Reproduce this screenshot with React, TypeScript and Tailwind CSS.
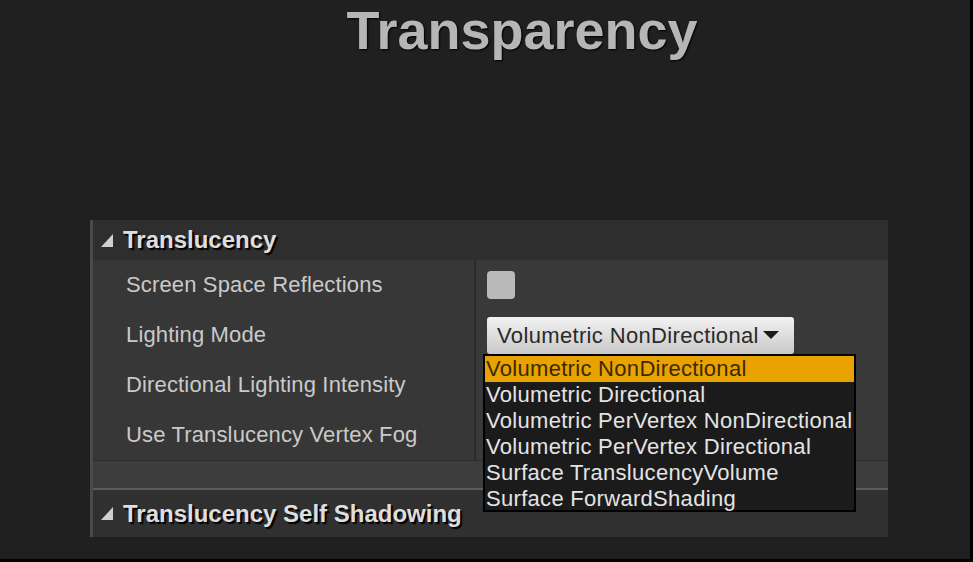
import React from "react";

const rows = [
  "Screen Space Reflections",
  "Lighting Mode",
  "Directional Lighting Intensity",
  "Use Translucency Vertex Fog",
];

const modes = [
  "Volumetric NonDirectional",
  "Volumetric Directional",
  "Volumetric PerVertex NonDirectional",
  "Volumetric PerVertex Directional",
  "Surface TranslucencyVolume",
  "Surface ForwardShading",
];

const Triangle = () => (
  <svg width="14" height="15" viewBox="0 0 14 15" className="shrink-0">
    <polygon points="13,1 13,14 1,14" fill="#cfcfcf" />
  </svg>
);

const SectionHeader = ({ title, h }: { title: string; h: string }) => (
  <div className={`flex items-center gap-[9px] pl-[7px] bg-[#2e2e2e] ${h}`}>
    <Triangle />
    <span className="text-[24px] font-bold leading-none text-[#dedede] [text-shadow:2px_2px_1px_#000]">
      {title}
    </span>
  </div>
);

export default function App() {
  return (
    <div className="w-[973px] h-[562px] bg-[#202020] border-r-[3px] border-b-[3px] border-black flex flex-col font-['Liberation_Sans',Arial,sans-serif] overflow-hidden">
      <div className="h-[220px] shrink-0 pl-[74px] text-center">
        <h1 className="text-[54px] leading-[60px] font-bold text-[#b6b6b6] [text-shadow:1px_1px_2px_#000]">
          Transparency
        </h1>
      </div>

      <div className="relative ml-[90px] w-[798px] border-l-[3px] border-[#4a4a4a] flex flex-col">
        <SectionHeader title="Translucency" h="h-[40px]" />

        <div className="flex flex-col bg-[#373737]">
          {rows.map((label, i) => (
            <div key={label} className="flex h-[50px]">
              <div className="w-[381px] flex items-center pl-[33px] pb-[2px] text-[22px] tracking-[0.15px] text-[#cacaca]">
                {label}
              </div>
              <div className="w-[2px] bg-[#2a2a2a]" />
              <div className="flex-1 flex items-center pl-[11px] bg-[#393939]">
                {i === 0 && (
                  <div className="w-[28px] h-[28px] rounded-[4px] bg-[#b9b9b9]" />
                )}
                {i === 1 && (
                  <div className="w-[307px] h-[37px] rounded-[3px] bg-gradient-to-b from-[#f2f2f2] to-[#c9c9c9] flex items-center pl-[10px] gap-[4px] text-[22px] tracking-[0.35px] text-[#2a2a2a]">
                    <span>Volumetric NonDirectional</span>
                    <svg width="16" height="10" viewBox="0 0 16 10">
                      <polygon points="0,1 16,1 8,9" fill="#1a1a1a" />
                    </svg>
                  </div>
                )}
              </div>
            </div>
          ))}
        </div>

        <div className="h-[1px] bg-[#2b2b2b]" />
        <div className="h-[27px] bg-[#3d3d3d]" />
        <div className="h-[2px] bg-[#5c5c5c]" />
        <SectionHeader title="Translucency Self Shadowing" h="h-[47px] bg-[#303030]" />

        <div className="absolute left-[390px] top-[134px] w-[373px] h-[158px] bg-[#1b1b1b] border-2 border-black flex flex-col text-[22px] leading-[26px] tracking-[0.3px] text-[#e4e4e4]">
          {modes.map((m, i) => (
            <div
              key={m}
              className={`h-[26px] pl-[1px] whitespace-nowrap ${
                i === 0 ? "bg-[#e8a300] text-[#3b2a00]" : ""
              }`}
            >
              {m}
            </div>
          ))}
        </div>
      </div>
    </div>
  );
}
